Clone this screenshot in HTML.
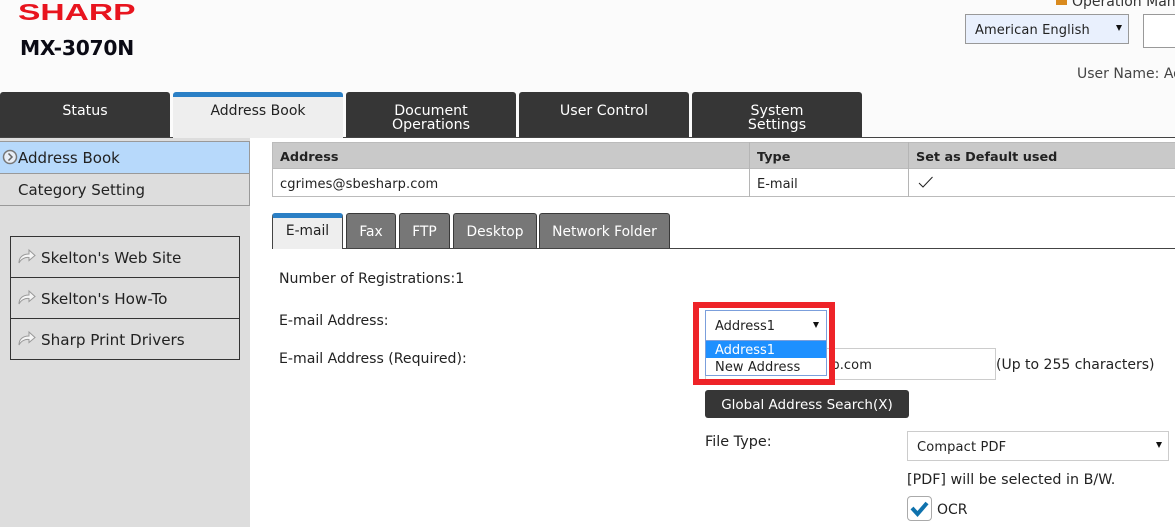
<!DOCTYPE html>
<html><head><meta charset="utf-8">
<style>
html,body{margin:0;padding:0;background:#fff}
#p{position:relative;width:1175px;height:527px;overflow:hidden;background:#fff;font-family:"DejaVu Sans","Liberation Sans",sans-serif;font-size:14px;color:#222}
#p div{position:absolute;white-space:nowrap;box-sizing:border-box}
.t{line-height:16px}
.tab{background:#363636;color:#fff;border-radius:3px 3px 0 0;text-align:center;line-height:14px;font-size:14.200px;top:92px;height:45px;width:170px}
.st{background:#777;color:#fff;border:1px solid #3a3a3a;border-bottom:none;border-radius:3px 3px 0 0;top:213px;height:35px;text-align:center;line-height:36px;font-size:13.800px}
.lk{left:10px;width:230px;height:42px;border:1px solid #333;line-height:42px;padding-left:30px;font-size:15.200px;color:#222}
.arr{position:absolute;left:7px;top:11px}
.s{font-size:13px}
</style></head><body><div id="p">
<div style="left:0;top:0;width:1175px;height:137px;background:#fbfbfb"></div>

<div style="left:18px;top:-1px;font:bold 23px/26px 'Liberation Sans',sans-serif;color:#e8141e;transform:scaleX(1.46);transform-origin:left">SHARP</div>
<div style="left:20px;top:36px;font:bold 20.300px/24px 'DejaVu Sans',sans-serif;color:#0a0a14;letter-spacing:-.25px">MX-3070N</div>

<div style="left:1056px;top:-6px;width:11px;height:11px;background:#d98a1e"></div>
<div class="t" style="left:1072px;top:-6px;color:#333">Operation Manual</div>
<div style="left:965px;top:14px;width:164px;height:30px;background:#e9f0fd;border:1px solid #999"></div>
<div class="t s" style="left:975px;top:23px;color:#222;letter-spacing:.12px">American English</div>
<div style="left:1116px;top:25px;width:0;height:0;border-left:3px solid transparent;border-right:3px solid transparent;border-top:6px solid #111"></div>
<div style="left:1143px;top:14px;width:40px;height:34px;background:#fff;border:1px solid #999"></div>
<div class="t" style="left:1077px;top:66px;color:#444">User Name: Administrator</div>
<div style="left:0;top:137px;width:1175px;height:1px;background:#444"></div>

<div class="tab" style="left:0;padding-top:12px">Status</div>
<div class="tab" style="left:173px;width:170px;background:#eee;color:#222;border-top:5px solid #2a7fc5;padding-top:7px;height:46px;font-size:14px">Address Book</div>
<div class="tab" style="left:346px;padding-top:12px">Document<br>Operations</div>
<div class="tab" style="left:519px;padding-top:12px">User Control</div>
<div class="tab" style="left:692px;padding-top:12px">System<br>Settings</div>

<div style="left:0;top:138px;width:250px;height:389px;background:#ddd"></div>
<div style="left:0;top:141px;width:250px;height:33px;background:#b7d9fb;border:1px solid #999;border-left:none"></div>
<div style="left:0;top:173px;width:250px;height:33px;border:1px solid #999;border-left:none"></div>
<svg style="position:absolute;left:2px;top:149px" width="16" height="16" viewBox="0 0 16 16"><circle cx="8" cy="8" r="6.500" fill="#e8eef6" stroke="#777" stroke-width="1.500"/><path d="M6.500 4.500L10 8L6.500 11.500" fill="none" stroke="#666" stroke-width="1.500"/></svg>
<div class="t" style="left:18px;top:150px;font-size:15px;color:#222">Address Book</div>
<div class="t" style="left:18px;top:182px;font-size:15px;color:#222">Category Setting</div>

<div class="lk" style="top:236px"><svg class="arr" width="18" height="16" viewBox="0 0 18 16"><path d="M1 15C1 9 5 6 11 6V2L17 7.500L11 12.500V9.500C7 9 3 11 1 15Z" fill="#f5f5f5" stroke="#999"/></svg>Skelton's Web Site</div>
<div class="lk" style="top:277px"><svg class="arr" width="18" height="16" viewBox="0 0 18 16"><path d="M1 15C1 9 5 6 11 6V2L17 7.500L11 12.500V9.500C7 9 3 11 1 15Z" fill="#f5f5f5" stroke="#999"/></svg>Skelton's How-To</div>
<div class="lk" style="top:318px"><svg class="arr" width="18" height="16" viewBox="0 0 18 16"><path d="M1 15C1 9 5 6 11 6V2L17 7.500L11 12.500V9.500C7 9 3 11 1 15Z" fill="#f5f5f5" stroke="#999"/></svg>Sharp Print Drivers</div>

<div style="left:272px;top:142px;width:910px;height:27px;background:#c9c9c9;border:1px solid #bbb"></div>
<div style="left:272px;top:168px;width:910px;height:29px;background:#fff;border:1px solid #bbb"></div>
<div style="left:749px;top:142px;width:1px;height:55px;background:#b5b5b5"></div>
<div style="left:908px;top:142px;width:1px;height:55px;background:#b5b5b5"></div>
<div class="t" style="left:280px;top:150px;font-weight:bold;font-size:12.800px;color:#222">Address</div>
<div class="t" style="left:757px;top:150px;font-weight:bold;font-size:12.800px;color:#222">Type</div>
<div class="t" style="left:916px;top:150px;font-weight:bold;font-size:12.800px;color:#222">Set as Default used</div>
<div class="t s" style="left:280px;top:177px;color:#222;letter-spacing:.1px">cgrimes@sbesharp.com</div>
<div class="t s" style="left:757px;top:177px;color:#222">E-mail</div>
<svg style="position:absolute;left:918px;top:176px" width="16" height="13" viewBox="0 0 16 13"><path d="M1 7L5 11L14.500 1" fill="none" stroke="#222" stroke-width="1"/></svg>

<div style="left:272px;top:248px;width:903px;height:1px;background:#444"></div>
<div class="st" style="left:272px;width:71px;background:#eee;color:#222;border-top:5px solid #2a7fc5;line-height:27px;height:36px;border-color:#2a7fc5 #444 #444">E-mail</div>
<div class="st" style="left:346px;width:50px">Fax</div>
<div class="st" style="left:399px;width:51px">FTP</div>
<div class="st" style="left:453px;width:84px">Desktop</div>
<div class="st" style="left:539px;width:131px">Network Folder</div>

<div class="t" style="left:279px;top:271px;font-size:14.100px">Number of Registrations:1</div>
<div class="t" style="left:279px;top:313px;font-size:14.100px">E-mail Address:</div>
<div class="t" style="left:279px;top:351px;font-size:14.100px">E-mail Address (Required):</div>

<div style="left:705px;top:348px;width:291px;height:32px;background:#fff;border:1px solid #ccc"></div>
<div class="t s" style="left:826px;top:358px;width:46px;text-align:right;letter-spacing:.1px">p.com</div>
<div class="t" style="left:996px;top:357px">(Up to 255 characters)</div>

<div style="left:693px;top:302px;width:142px;height:83px;background:transparent;border:6px solid #ee2328;z-index:5"></div>
<div style="left:705px;top:310px;width:122px;height:31px;background:#fff;border:1px solid #7b9fdc;z-index:6"></div>
<div class="t s" style="left:715px;top:319px;z-index:7">Address1</div>
<div style="left:813px;top:322px;width:0;height:0;border-left:3px solid transparent;border-right:3px solid transparent;border-top:6px solid #111;z-index:7"></div>
<div style="left:705px;top:340px;width:122px;height:36px;background:#fff;border:1px solid #7b9fdc;z-index:6"></div>
<div style="left:706px;top:341px;width:120px;height:17px;background:#1e90ff;z-index:7"></div>
<div class="t s" style="left:715px;top:343px;color:#fff;z-index:8">Address1</div>
<div class="t s" style="left:715px;top:360px;z-index:8;letter-spacing:.1px">New Address</div>

<div style="left:705px;top:390px;width:204px;height:28px;background:#363636;border-radius:3px;color:#fff;text-align:center;line-height:30px;font-size:13.500px">Global Address Search(X)</div>

<div class="t" style="left:705px;top:434px;font-size:14.400px">File Type:</div>
<div style="left:907px;top:431px;width:262px;height:30px;background:#fff;border:1px solid #ccc"></div>
<div class="t s" style="left:917px;top:440px;letter-spacing:.15px">Compact PDF</div>
<div style="left:1156px;top:442px;width:0;height:0;border-left:3px solid transparent;border-right:3px solid transparent;border-top:6px solid #111"></div>
<div class="t" style="left:907px;top:472px;font-size:14.300px">[PDF] will be selected in B/W.</div>
<div style="left:907px;top:496px;width:25px;height:25px;background:#fff;border:1px solid #aaa;border-radius:4px"></div>
<svg style="position:absolute;left:907px;top:496px" width="25" height="25" viewBox="0 0 25 25"><path d="M5 12L10.500 18L20 7" fill="none" stroke="#0f72ad" stroke-width="4"/></svg>
<div class="t" style="left:937px;top:502px">OCR</div>
</div></body></html>
